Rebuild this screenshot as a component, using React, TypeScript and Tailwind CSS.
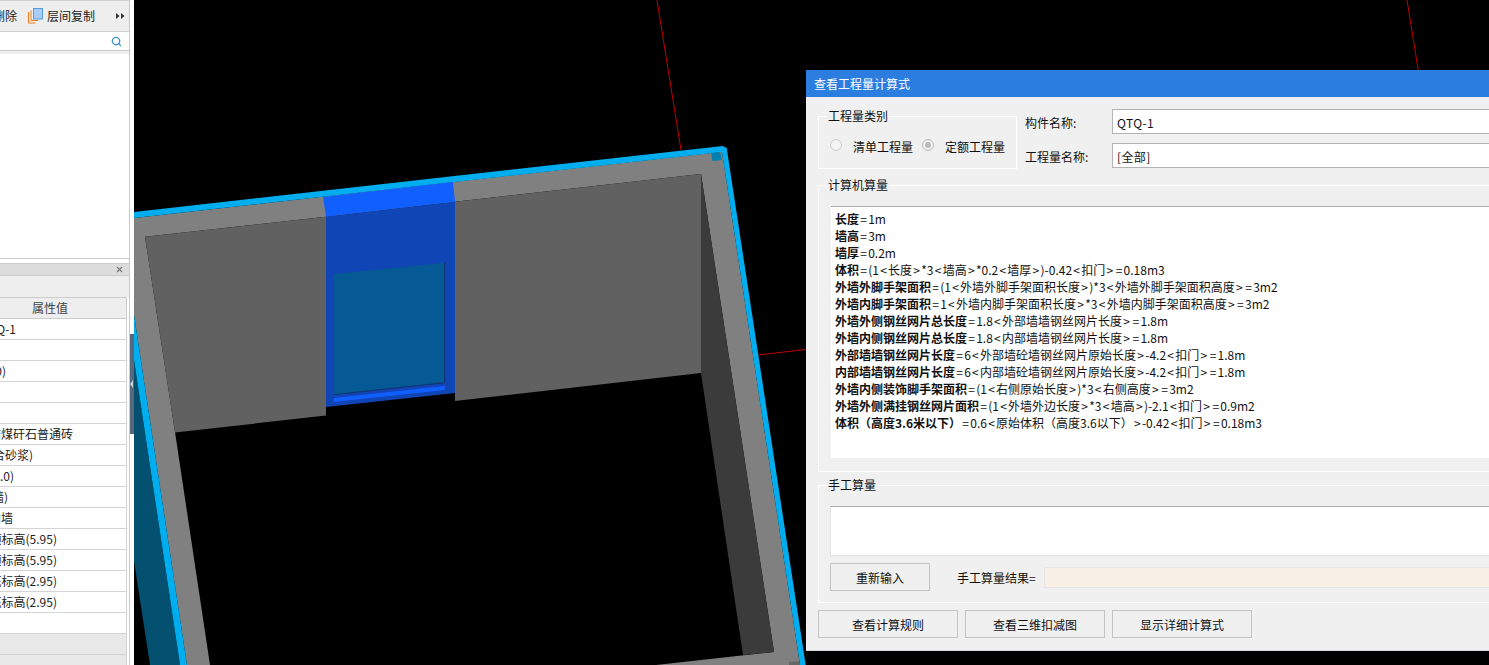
import React from "react";
import { Search, X } from "lucide-react";

const rows: { text: string; w: string }[] = [
  { text: "QTQ-1", w: "w-[16px]" },
  { text: "", w: "w-[1px]" },
  { text: "(0)", w: "w-[6px]" },
  { text: "", w: "w-[1px]" },
  { text: "", w: "w-[1px]" },
  { text: "烧结煤矸石普通砖", w: "w-[73px]" },
  { text: "(混合砂浆)", w: "w-[33px]" },
  { text: "(M5.0)", w: "w-[14px]" },
  { text: "(内墙)", w: "w-[8px]" },
  { text: "内墙", w: "w-[13px]" },
  { text: "顶标高(5.95)", w: "w-[57px]" },
  { text: "顶标高(5.95)", w: "w-[57px]" },
  { text: "底标高(2.95)", w: "w-[57px]" },
  { text: "底标高(2.95)", w: "w-[57px]" },
  { text: "", w: "w-[1px]" },
];

const formulas: [string, string][] = [
  ["长度", "=1m"],
  ["墙高", "=3m"],
  ["墙厚", "=0.2m"],
  ["体积", "=(1<长度>*3<墙高>*0.2<墙厚>)-0.42<扣门>=0.18m3"],
  ["外墙外脚手架面积", "=(1<外墙外脚手架面积长度>)*3<外墙外脚手架面积高度>=3m2"],
  ["外墙内脚手架面积", "=1<外墙内脚手架面积长度>*3<外墙内脚手架面积高度>=3m2"],
  ["外墙外侧钢丝网片总长度", "=1.8<外部墙墙钢丝网片长度>=1.8m"],
  ["外墙内侧钢丝网片总长度", "=1.8<内部墙墙钢丝网片长度>=1.8m"],
  ["外部墙墙钢丝网片长度", "=6<外部墙砼墙钢丝网片原始长度>-4.2<扣门>=1.8m"],
  ["内部墙墙钢丝网片长度", "=6<内部墙砼墙钢丝网片原始长度>-4.2<扣门>=1.8m"],
  ["外墙内侧装饰脚手架面积", "=(1<右侧原始长度>)*3<右侧高度>=3m2"],
  ["外墙外侧满挂钢丝网片面积", "=(1<外墙外边长度>*3<墙高>)-2.1<扣门>=0.9m2"],
  ["体积（高度3.6米以下）", "=0.6<原始体积（高度3.6以下）>-0.42<扣门>=0.18m3"],
];

function Spaced({ text }: { text: string }) {
  return (
    <>
      {text.split(/([<>=])/).map((part, i) =>
        i % 2 === 1 ? (
          <span key={i} className="mx-[1.25px]">
            {part}
          </span>
        ) : (
          <span key={i}>{part}</span>
        )
      )}
    </>
  );
}

function Scene() {
  return (
    <svg className="block w-full h-full" viewBox="134 0 1355 665">
      <g stroke="#c00000" strokeWidth="1" fill="none">
        <line x1="657" y1="0" x2="681" y2="150" />
        <line x1="1407" y1="0" x2="1419" y2="75" />
        <line x1="758" y1="355" x2="810" y2="349" />
      </g>
      <polygon fill="#035070" points="134,360 180,665 150,665 134,561" />
      <polygon
        fill="#808080"
        points="134,218 722,151.7 800,665 656,665 774,652 701,174 455,201.7 326,216.7 145,236.7 175,432 210,665 187,665 134,315"
      />
      <polygon fill="#00aeef" points="134,212 722.7,146 726.7,148 805.7,665 800,665 722,152 134,218" />
      <polygon fill="#00aeef" points="134,315 187,665 180,665 134,360" />
      <polygon fill="#616161" points="145,236.7 326,216.7 326,415.5 175,432.5" />
      <polygon fill="#616161" points="455,201.7 701,174 701,373 455,401" />
      <polygon fill="#3b3b3b" points="701,174 774,652 743,655 701,373" />
      <polygon fill="#1060ff" points="323,197 453,182 455,201.7 326,216.7" />
      <polygon fill="#0f45b5" points="326,216.7 455,201.7 455,393 326,407" />
      <polygon fill="#055a96" points="333.7,274 444.7,262.7 444.7,382.7 333.7,394.7" />
      <polygon fill="#1060ff" points="333.7,398 444.7,386 444.7,390 333.7,402" />
      <line x1="333.7" y1="394.7" x2="444.7" y2="382.7" stroke="#16306e" strokeWidth="1" />
      <line x1="444.7" y1="262.7" x2="444.7" y2="382.7" stroke="#16306e" strokeWidth="1" />
      <polygon fill="#0680b0" points="711,153 720,152 722,160 712.5,161" />
      <polygon fill="#666666" points="789,662 799,661 800,665 789,665" />
    </svg>
  );
}

function LeftPanel() {
  return (
    <div className="relative w-[134px] h-full shrink-0 bg-white overflow-hidden">
      <div className="w-[130px] h-full flex flex-col border-r border-[#c8c8c8] text-[12px] leading-[16px] text-[#222]">
        <div className="h-[32px] shrink-0 bg-[#eeeeee] border-t border-b border-[#d0d0d0] flex items-center">
          <div className="w-[17px] flex justify-end whitespace-nowrap shrink-0">删除</div>
          <svg className="ml-[11px] shrink-0" width="15" height="16" viewBox="0 0 15 16">
            <path d="M0.500 4v11h7M3 2.500v10h7" fill="none" stroke="#f07a1a" strokeWidth="1" />
            <rect x="5.500" y="0.500" width="9" height="10.500" fill="#a8cdf5" stroke="#5a9be0" />
          </svg>
          <span className="ml-[4px] whitespace-nowrap">层间复制</span>
          <svg className="ml-auto mr-[4px] shrink-0" width="9" height="6" viewBox="0 0 9 6">
            <path d="M0 0l3.500 3L0 6zM5 0l3.500 3L5 6z" fill="#333333" />
          </svg>
        </div>
        <div className="h-[19px] shrink-0 bg-white border-b border-[#c8c8c8] flex items-center justify-end pr-[7px]">
          <Search size={11} strokeWidth={3} className="text-[#3d92c8]" />
        </div>
        <div className="h-[3px] shrink-0 bg-[#eeeeee]" />
        <div className="h-[205px] shrink-0 bg-white border-b border-[#c8c8c8]" />
        <div className="h-[4px] shrink-0 bg-white" />
        <div className="h-[12px] shrink-0 bg-[#dcdcdc] border-t border-[#cccccc] flex items-center justify-end pr-[5px]">
          <X size={9} strokeWidth={3} className="text-[#777]" />
        </div>
        <div className="h-[22px] shrink-0 bg-[#eeeeee] border-t border-[#cccccc]" />
        <div className="h-[22px] shrink-0 w-[127px] bg-[#eeeeee] border-t border-b border-r border-[#cccccc] flex items-center pl-[32px] text-[#444]">
          属性值
        </div>
        <div className="w-[127px] border-r border-[#d4d4d4] shrink-0">
          {rows.map((r, i) => (
            <div key={i} className="h-[21px] border-b border-[#d4d4d4] bg-white flex items-center overflow-hidden">
              <div className={`${r.w} flex justify-end whitespace-nowrap shrink-0`}>{r.text}</div>
            </div>
          ))}
        </div>
        <div className="h-[21px] shrink-0 w-[127px] bg-[#e8e8e8] border-b border-r border-[#d4d4d4]" />
        <div className="flex-1 w-[127px] bg-[#e8e8e8] border-r border-[#d4d4d4]" />
      </div>
      <div className="absolute left-[130px] top-[334px] w-[4px] h-[100px] bg-[#56697c] flex items-center">
        <div className="w-0 h-0 border-y-[4px] border-y-transparent border-r-[3px] border-r-[#c8d0d8]" />
      </div>
    </div>
  );
}

function Field({ label, value }: { label: string; value: string }) {
  return (
    <div className="flex items-center">
      <span className="w-[87px] shrink-0 pt-[2px]">{label}</span>
      <div className="w-[500px] h-full bg-white border border-[#b4b4b4] pl-[4px] pt-[1px] flex items-center tracking-[0.4px]">
        {value}
      </div>
    </div>
  );
}

function Btn({ children, w }: { children: string; w: string }) {
  return (
    <button className={`${w} h-[28px] shrink-0 border border-[#c4c4c4] bg-[#f0f0f0] text-center text-[12px] text-[#111]`}>
      {children}
    </button>
  );
}

function Dialog() {
  return (
    <div className="absolute left-[806px] top-[70px] w-[800px] h-[581px] bg-[#f0f0f0] border-b border-[#d8d8e0] text-[12px] leading-[17px] text-[#111]">
      <div className="h-[27px] bg-[#2b7ee0] text-white flex items-center pl-[8px]">查看工程量计算式</div>
      <div className="pl-[12px] flex flex-col">
        <div className="mt-[11px] h-[61px] flex">
          <fieldset className="w-[199px] h-[61px] border border-white shrink-0">
            <legend className="ml-[8px] px-[1px] leading-[15px] pb-[2px]">工程量类别</legend>
            <div className="flex items-center mt-[13px] pl-[11px]">
              <span className="w-[12px] h-[12px] rounded-full border border-[#cccccc] bg-[#f4f4f4] -mt-[3px]" />
              <span className="ml-[11px]">清单工程量</span>
              <span className="ml-[9px] w-[12px] h-[12px] rounded-full border border-[#bbbbbb] -mt-[3px] flex items-center justify-center">
                <span className="w-[6px] h-[6px] rounded-full bg-[#bbbbbb]" />
              </span>
              <span className="ml-[11px]">定额工程量</span>
            </div>
          </fieldset>
          <div className="ml-[8px] flex flex-col">
            <div className="mt-[1px] h-[25px] flex">
              <Field label="构件名称:" value="QTQ-1" />
            </div>
            <div className="mt-[9px] h-[25px] flex">
              <Field label="工程量名称:" value="[全部]" />
            </div>
          </div>
        </div>
        <fieldset className="mt-[8px] h-[295px] border border-white">
          <legend className="ml-[8px] px-[1px] leading-[15px] pb-[2px]">计算机算量</legend>
          <div className="mt-[12px] ml-[12px] h-[252px] bg-white border-t border-[#aaaaaa] pl-[4px] pt-[3px]">
            {formulas.map(([a, b], i) => (
              <div key={i} className="h-[17px] whitespace-nowrap">
                <span className="font-bold">{a}</span>
                <Spaced text={b} />
              </div>
            ))}
          </div>
        </fieldset>
        <fieldset className="mt-[5px] h-[126px] border border-white">
          <legend className="ml-[8px] px-[1px] leading-[15px] pb-[2px]">手工算量</legend>
          <div className="mt-[12px] ml-[11px] h-[50px] bg-white border-t border-[#aaaaaa] border-l border-b border-l-[#e4e4e4] border-b-[#e4e4e4]" />
          <div className="mt-[7px] ml-[11px] flex items-center">
            <Btn w="w-[100px]">重新输入</Btn>
            <span className="ml-[27px] whitespace-nowrap">手工算量结果=</span>
            <div className="ml-[8px] h-[21px] w-[500px] bg-[#f8efe6] border border-[#e6e6e6]" />
          </div>
        </fieldset>
        <div className="mt-[7px] flex gap-[7px]">
          <Btn w="w-[140px]">查看计算规则</Btn>
          <Btn w="w-[140px]">查看三维扣减图</Btn>
          <Btn w="w-[140px]">显示详细计算式</Btn>
        </div>
      </div>
    </div>
  );
}

export default function App() {
  return (
    <div className="relative w-[1489px] h-[665px] overflow-hidden bg-black flex font-['Noto_Sans_CJK_SC','Microsoft_YaHei',sans-serif]">
      <LeftPanel />
      <div className="flex-1 h-full">
        <Scene />
      </div>
      <Dialog />
    </div>
  );
}
